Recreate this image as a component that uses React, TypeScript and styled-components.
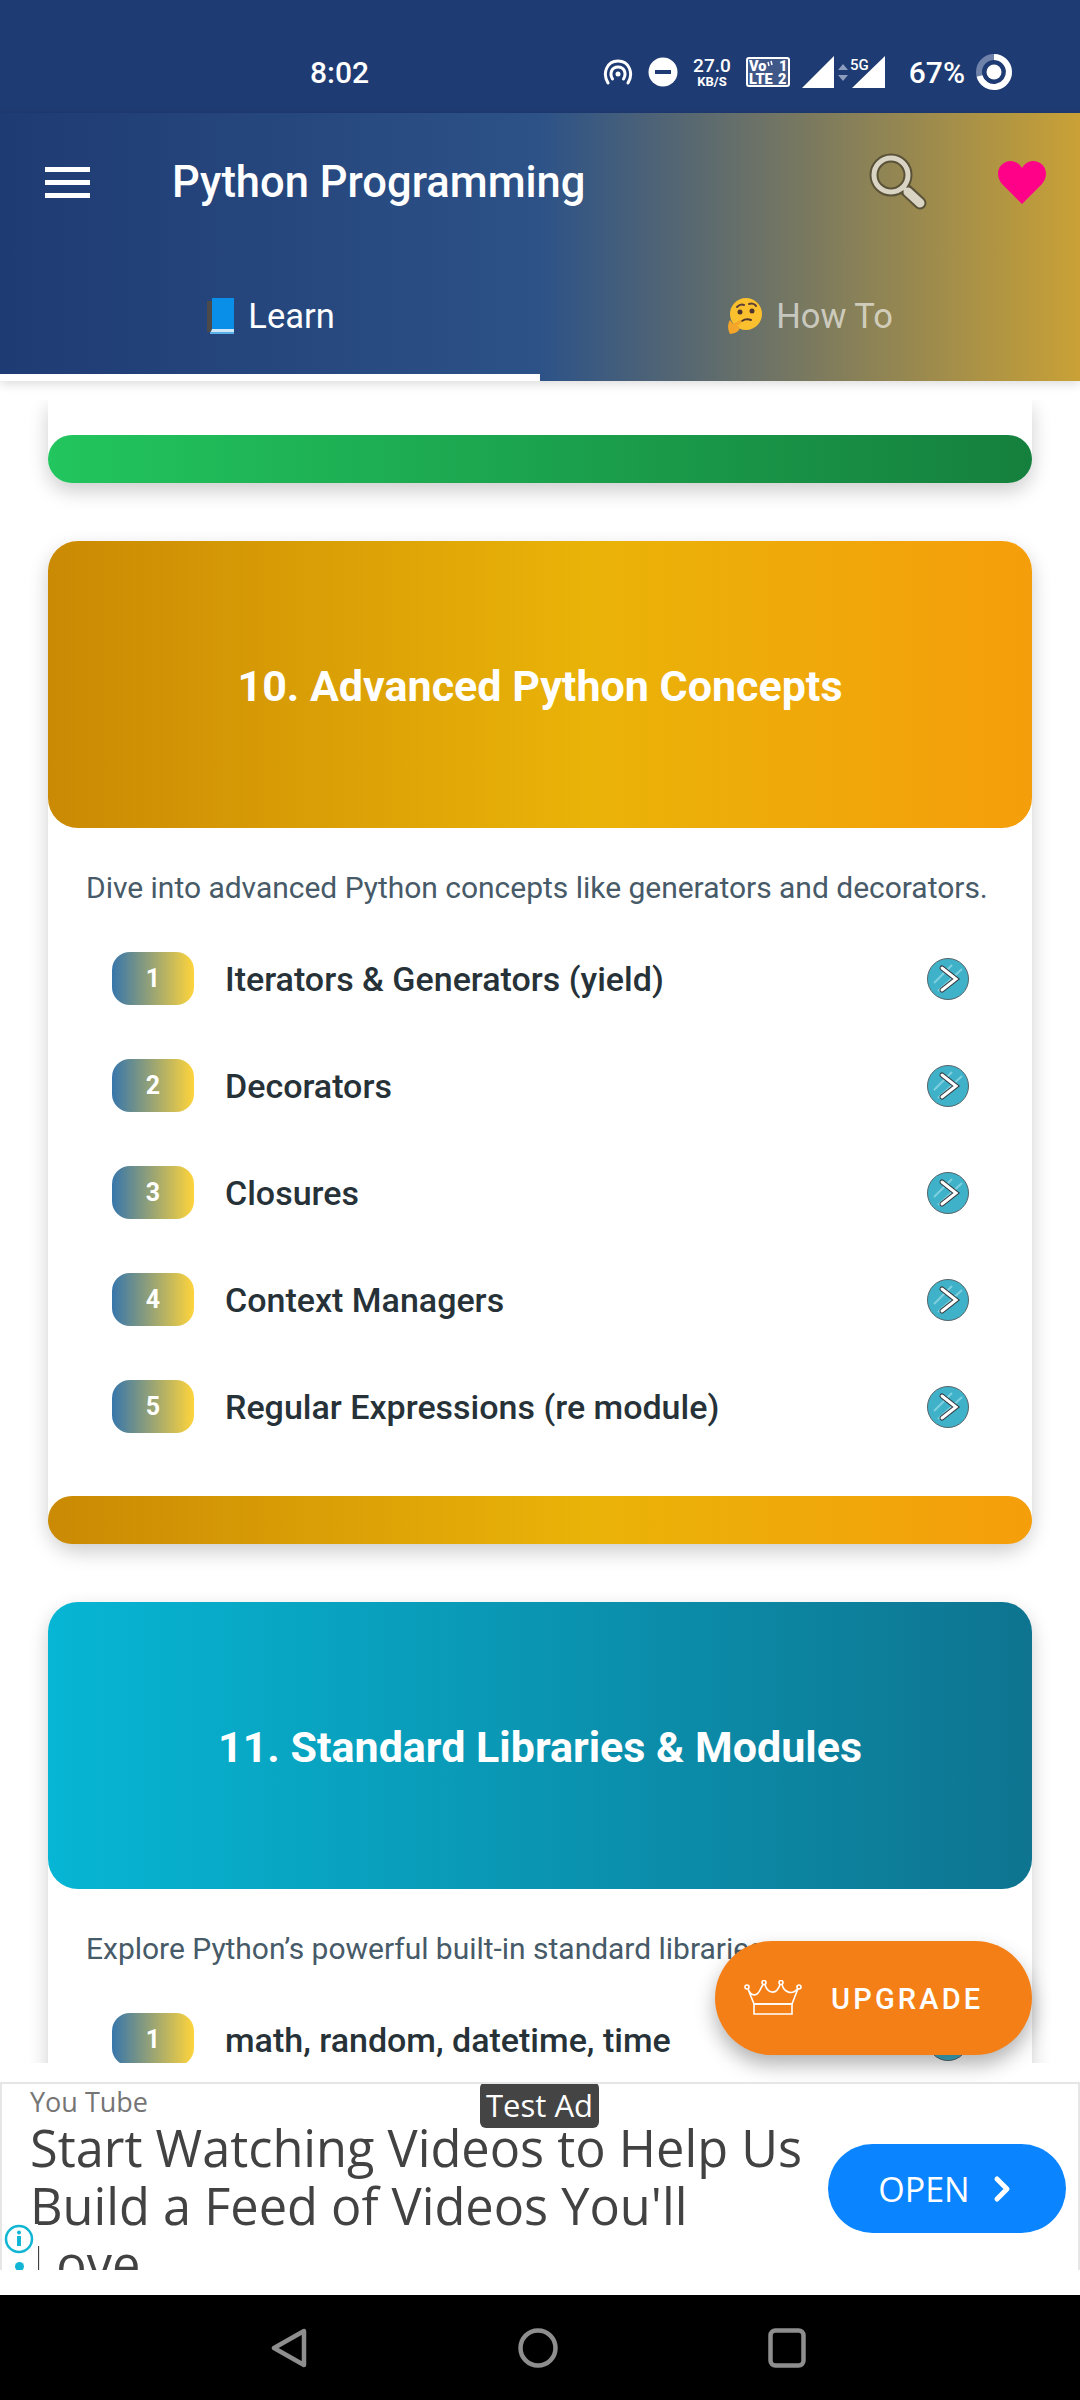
import React from "react";
import styled, { createGlobalStyle } from "styled-components";
import { ChevronRight } from "lucide-react";

type Lesson = { num: number; title: string };

const advanced: Lesson[] = [
  { num: 1, title: "Iterators & Generators (yield)" },
  { num: 2, title: "Decorators" },
  { num: 3, title: "Closures" },
  { num: 4, title: "Context Managers" },
  { num: 5, title: "Regular Expressions (re module)" },
];

const gold = "linear-gradient(90deg, #ca8a04 0%, #eab308 55%, #f59e0b 100%)";
const cyan = "linear-gradient(90deg, #06b6d4 0%, #0e7490 100%)";
const green = "linear-gradient(90deg, #22c55e 0%, #15803d 100%)";

function HotspotIcon() {
  return (
    <svg width="30" height="26" viewBox="0 0 30 26" fill="none" stroke="#fff" strokeWidth="3" strokeLinecap="round">
      <path d="M5 24C-1 14 4 2 15 2s16 12 10 22" />
      <path d="M9.500 20C6 14 9 8 15 8s9 6 5.500 12" />
      <circle cx="15" cy="15" r="2.500" fill="#fff" stroke="none" />
    </svg>
  );
}

function DndIcon() {
  return (
    <svg width="30" height="30" viewBox="0 0 30 30">
      <circle cx="15" cy="15" r="14.500" fill="#fff" />
      <rect x="7" y="13" width="16" height="4" fill="#1f3b73" />
    </svg>
  );
}

function VolteIcon() {
  return (
    <svg width="44" height="30" viewBox="0 0 44 30">
      <rect x="1" y="1" width="42" height="28" rx="2" fill="#fff" fillOpacity="0.15" stroke="#fff" strokeWidth="2" />
      <text x="3" y="13.500" fontFamily="Roboto, sans-serif" fontWeight="900" fontSize="14.500" fill="#fff">Vo</text>
      <path d="M22 5l1 4M25 4l1 4" stroke="#fff" strokeWidth="1.500" />
      <text x="33" y="13.500" fontFamily="Roboto, sans-serif" fontWeight="900" fontSize="14.500" fill="#fff">1</text>
      <text x="3" y="27" fontFamily="Roboto, sans-serif" fontWeight="900" fontSize="14.500" fill="#fff">LTE</text>
      <text x="32" y="27" fontFamily="Roboto, sans-serif" fontWeight="900" fontSize="14.500" fill="#fff">2</text>
    </svg>
  );
}

function SignalIcon() {
  return (
    <svg width="83" height="33" viewBox="0 0 83 33">
      <path d="M0 32 32 0v32z" fill="#fff" />
      <path d="M36 14l5-6 5 6zM36 19l5 6 5-6z" fill="#8c9dbd" />
      <path d="M50 32 83 0v32z" fill="#fff" />
      <text x="48" y="14" fontFamily="Roboto, sans-serif" fontWeight="500" fontSize="15" fill="#fff">5G</text>
    </svg>
  );
}

function BatteryIcon() {
  return (
    <svg width="38" height="38" viewBox="0 0 38 38" fill="none">
      <circle cx="19" cy="19" r="15" stroke="#6f83aa" strokeWidth="6" />
      <path d="M19 4a15 15 0 1 1-14.500 19" stroke="#fff" strokeWidth="6" />
      <circle cx="19" cy="19" r="7.500" fill="#fff" />
    </svg>
  );
}

function MagnifierIcon() {
  return (
    <svg width="58" height="58" viewBox="0 0 58 58" fill="none" strokeLinecap="round">
      <circle cx="22" cy="22" r="17" stroke="#5a5238" strokeWidth="9" />
      <path d="M37 37l14 13" stroke="#5a5238" strokeWidth="13" />
      <circle cx="22" cy="22" r="17" stroke="#d9d4c4" strokeWidth="5" />
      <path d="M35 35l3 3" stroke="#d9d4c4" strokeWidth="4" />
      <path d="M39 39l12 11" stroke="#d9d4c4" strokeWidth="9" />
    </svg>
  );
}

function HeartIcon() {
  return (
    <svg width="48" height="44" viewBox="0 0 48 44">
      <path d="M24 44 4 24C-2 17-1 7 6 3c6-4 14-2 18 5 4-7 12-9 18-5 7 4 8 14 2 21z" fill="#ff0088" />
    </svg>
  );
}

function BookIcon() {
  return (
    <svg width="30" height="36" viewBox="0 0 30 36">
      <path d="M2 3h6v31H2z" fill="#4a4a4a" />
      <path d="M7 0h22v31H7z" fill="#0a8fe8" />
      <path d="M7 31h22v5H5z" fill="#cfe8f7" />
      <path d="M5 34h24v2H5z" fill="#5cb0e8" />
    </svg>
  );
}

function ThinkingIcon() {
  return (
    <svg width="36" height="36" viewBox="0 0 36 36">
      <circle cx="19" cy="16" r="16" fill="#fbc02d" />
      <path d="M10 9c2-2 5-3 7-2M22 6c3-1 6 0 7 2" stroke="#5d4037" strokeWidth="2" fill="none" strokeLinecap="round" />
      <circle cx="13" cy="14" r="2.500" fill="#4e342e" />
      <circle cx="25" cy="13" r="2.500" fill="#4e342e" />
      <path d="M15 23c3-2 6-2 9-1" stroke="#4e342e" strokeWidth="2" fill="none" strokeLinecap="round" />
      <path d="M3 36c-3-6-2-11 0-14l3 4 7-4c2 0 2 3 0 4l-3 2c4 0 4 7-7 8z" fill="#f4a62a" />
    </svg>
  );
}

function ArrowBadge() {
  return (
    <svg width="44" height="44" viewBox="0 0 44 44" fill="none">
      <circle cx="22" cy="22" r="20.500" fill="#3fb2c9" stroke="#55656b" strokeWidth="1" />
      <path d="M8 26 26 8M12 34 36 12" stroke="#7fd0df" strokeWidth="2" />
      <path d="M16 11l14 11-14 11" stroke="#33363a" strokeWidth="5" strokeLinecap="round" strokeLinejoin="miter" />
      <path d="M16 11l14 11-14 11" stroke="#fff" strokeWidth="3" strokeLinecap="round" strokeLinejoin="miter" />
    </svg>
  );
}

function CrownIcon() {
  return (
    <svg width="58" height="36" viewBox="0 0 58 36" fill="none" stroke="#fff" strokeWidth="1.600">
      <circle cx="3" cy="7" r="2" />
      <circle cx="20" cy="2.500" r="2" />
      <circle cx="37" cy="2.500" r="2" />
      <circle cx="55" cy="7" r="2" />
      <path d="M4 9c3 7 9 9 13-1l2-3.500M21 4.500c2 8 11 12 15 0M38 4.500c2 8 10 11 16 4L48 24H10L4 9" />
      <path d="M10 24h38v10H10z" />
    </svg>
  );
}

function BackIcon() {
  return (
    <svg width="36" height="40" viewBox="0 0 36 40" fill="none">
      <path d="M33 3v34L3 20z" stroke="#8e8e8e" strokeWidth="4.500" strokeLinejoin="round" />
    </svg>
  );
}

function HomeIcon() {
  return (
    <svg width="40" height="40" viewBox="0 0 40 40" fill="none">
      <circle cx="20" cy="20" r="17.500" stroke="#8e8e8e" strokeWidth="4.500" />
    </svg>
  );
}

function RecentIcon() {
  return (
    <svg width="38" height="40" viewBox="0 0 38 40" fill="none">
      <rect x="2.500" y="2.500" width="33" height="35" rx="5" stroke="#8e8e8e" strokeWidth="4.500" />
    </svg>
  );
}

function InfoIcon() {
  return (
    <svg width="30" height="30" viewBox="0 0 30 30" fill="none">
      <circle cx="15" cy="15" r="13" stroke="#12b5d4" strokeWidth="2.500" />
      <circle cx="15" cy="8.500" r="2" fill="#12b5d4" />
      <rect x="13" y="12" width="4" height="10" fill="#12b5d4" />
    </svg>
  );
}

function LessonRow({ num, title }: Lesson) {
  return (
    <Row>
      <NumBadge>{num}</NumBadge>
      <RowTitle>{title}</RowTitle>
      <ArrowBadge />
    </Row>
  );
}

export default function App() {
  return (
    <Page>
      <GlobalStyle />
      <StatusBar>
        <Clock>8:02</Clock>
        <StatusIcons>
          <HotspotIcon />
          <DndIcon />
          <Speed>
            <SpeedValue>27.0</SpeedValue>
            <SpeedUnit>KB/S</SpeedUnit>
          </Speed>
          <VolteIcon />
          <SignalSlot>
            <SignalIcon />
          </SignalSlot>
          <Percent>67%</Percent>
          <BatteryIcon />
        </StatusIcons>
      </StatusBar>

      <Header>
        <Toolbar>
          <Burger>
            <span />
            <span />
            <span />
          </Burger>
          <AppTitle>Python Programming</AppTitle>
          <MagnifierIcon />
          <HeartIcon />
        </Toolbar>
        <Tabs>
          <Tab $active>
            <BookIcon />
            Learn
          </Tab>
          <Tab>
            <ThinkingIcon />
            How To
          </Tab>
        </Tabs>
      </Header>

      <Body>
        <Scroll>
          <Stub>
            <FootBar $bg={green} />
          </Stub>

          <Card>
            <Banner $bg={gold}>10. Advanced Python Concepts</Banner>
            <Desc>Dive into advanced Python concepts like generators and decorators.</Desc>
            <Lessons>
              {advanced.map((l) => (
                <LessonRow key={l.num} {...l} />
              ))}
            </Lessons>
            <FootBar $bg={gold} />
          </Card>

          <Card>
            <Banner $bg={cyan}>11. Standard Libraries &amp; Modules</Banner>
            <Desc>Explore Python’s powerful built-in standard libraries.</Desc>
            <Lessons>
              <LessonRow num={1} title="math, random, datetime, time" />
            </Lessons>
          </Card>
        </Scroll>

        <Upgrade>
          <CrownIcon />
          <UpgradeLabel>UPGRADE</UpgradeLabel>
        </Upgrade>
      </Body>

      <AdSlot>
        <Ad>
          <AdBadge>Test Ad</AdBadge>
          <AdText>
            <AdSource>You Tube</AdSource>
            <AdHeadline>Start Watching Videos to Help Us Build a Feed of Videos You'll Love</AdHeadline>
          </AdText>
          <OpenButton>
            OPEN
            <ChevronRight size={40} strokeWidth={3} />
          </OpenButton>
          <AdChoices>
            <InfoIcon />
            <AdDot />
          </AdChoices>
        </Ad>
      </AdSlot>

      <NavBar>
        <BackIcon />
        <HomeIcon />
        <RecentIcon />
      </NavBar>
    </Page>
  );
}

const GlobalStyle = createGlobalStyle`
  html, body {
    margin: 0;
    padding: 0;
    background: #fff;
  }
  * {
    box-sizing: border-box;
  }
`;

const Page = styled.div`
  position: relative;
  width: 1080px;
  height: 2400px;
  display: flex;
  flex-direction: column;
  overflow: hidden;
  font-family: Roboto, sans-serif;
  background: #fff;
`;

const StatusBar = styled.div`
  height: 113px;
  flex: none;
  display: flex;
  align-items: center;
  justify-content: space-between;
  padding: 31px 67px 0 310px;
  background: #1f3b73;
  color: #fff;
`;

const Clock = styled.div`
  font-size: 30px;
  font-weight: 500;
`;

const StatusIcons = styled.div`
  display: flex;
  align-items: center;
  gap: 15px;
`;

const Speed = styled.div`
  display: flex;
  flex-direction: column;
  align-items: center;
  line-height: 1;
`;

const SpeedValue = styled.span`
  font-size: 19px;
  font-weight: 500;
`;

const SpeedUnit = styled.span`
  font-size: 13px;
  font-weight: 700;
`;

const SignalSlot = styled.div`
  display: flex;
  margin: 0 9px 0 -3px;
`;

const Percent = styled.span`
  margin-right: -5px;
  font-size: 30px;
  font-weight: 500;
`;

const Header = styled.div`
  position: relative;
  z-index: 2;
  flex: none;
  height: 268px;
  display: flex;
  flex-direction: column;
  background: linear-gradient(90deg, #1f3b73 0%, #2c5288 50%, #c9a136 100%);
  box-shadow: 0 3px 10px rgba(0, 0, 0, 0.14);
`;

const Toolbar = styled.div`
  height: 138px;
  flex: none;
  display: flex;
  align-items: center;
  gap: 71px;
  padding: 0 34px 0 45px;
`;

const Burger = styled.div`
  width: 45px;
  margin-right: -71px;
  display: flex;
  flex-direction: column;
  gap: 8px;

  span {
    height: 5px;
    background: #fff;
  }
`;

const AppTitle = styled.div`
  flex: 1;
  margin-left: 82px;
  margin-right: -71px;
  font-size: 43.500px;
  font-weight: 500;
  color: #fff;
`;

const Tabs = styled.div`
  flex: 1;
  display: flex;
`;

const Tab = styled.div<{ $active?: boolean }>`
  flex: 1;
  display: flex;
  align-items: center;
  justify-content: center;
  gap: 13px;
  padding-top: 6px;
  font-size: 34.500px;
  color: ${(p) => (p.$active ? "#fff" : "rgba(255, 255, 255, 0.62)")};
  border-bottom: 7px solid ${(p) => (p.$active ? "#fff" : "transparent")};
`;

const Body = styled.div`
  position: relative;
  flex: none;
  height: 1682px;
  padding-top: 19px;
`;

const Scroll = styled.div`
  height: 100%;
  overflow: hidden;
  display: flex;
  flex-direction: column;
  gap: 58px;
  padding: 0 48px;
  background: #fff;
`;

const Stub = styled.div`
  flex: none;
  padding-top: 35px;
  border-radius: 0 0 24px 24px;
  background: #fff;
  box-shadow: 0 8px 20px rgba(0, 0, 0, 0.2);
`;

const Card = styled.div`
  flex: none;
  display: flex;
  flex-direction: column;
  border-radius: 30px;
  background: #fff;
  box-shadow: 0 8px 20px rgba(0, 0, 0, 0.2);
`;

const Banner = styled.div<{ $bg: string }>`
  height: 287px;
  display: flex;
  align-items: center;
  justify-content: center;
  padding-top: 2px;
  border-radius: 30px;
  background: ${(p) => p.$bg};
  font-size: 43px;
  font-weight: 700;
  color: #fff;
`;

const Desc = styled.div`
  margin-top: 42px;
  padding-left: 38px;
  font-size: 30px;
  line-height: 36px;
  letter-spacing: -0.020px;
  white-space: nowrap;
  color: #475a68;
`;

const Lessons = styled.div`
  margin-top: 19px;
  padding-bottom: 36px;
  display: flex;
  flex-direction: column;
`;

const Row = styled.div`
  height: 107px;
  display: flex;
  align-items: center;
  padding: 0 62px 0 64px;
`;

const NumBadge = styled.div`
  width: 82px;
  height: 53px;
  flex: none;
  display: flex;
  align-items: center;
  justify-content: center;
  border-radius: 18px;
  background: linear-gradient(90deg, #3776ab 0%, #ffd43b 100%);
  font-size: 25px;
  font-weight: 700;
  color: #fff;
`;

const RowTitle = styled.div`
  flex: 1;
  margin-left: 31px;
  font-size: 34px;
  font-weight: 500;
  color: #263238;
`;

const FootBar = styled.div<{ $bg: string }>`
  height: 48px;
  margin-top: auto;
  border-radius: 24px;
  background: ${(p) => p.$bg};
`;

const Upgrade = styled.div`
  position: absolute;
  right: 48px;
  bottom: 8px;
  width: 317px;
  height: 114px;
  display: flex;
  align-items: center;
  gap: 29px;
  padding-left: 29px;
  border-radius: 57px;
  background: #f57f17;
  box-shadow: 0 10px 20px rgba(0, 0, 0, 0.3);
`;

const UpgradeLabel = styled.span`
  padding-top: 2px;
  font-size: 29px;
  font-weight: 500;
  letter-spacing: 3.200px;
  color: #fff;
`;

const AdSlot = styled.div`
  flex: none;
  height: 232px;
  padding-top: 19px;
  background: #fff;
`;

const Ad = styled.div`
  position: relative;
  height: 188px;
  display: flex;
  justify-content: space-between;
  overflow: hidden;
  border: 2px solid #e6e6e6;
  border-width: 2px 2px 0;
  padding: 0 12px 0 28px;
  font-family: "Open Sans", sans-serif;
`;

const AdBadge = styled.div`
  position: absolute;
  top: -2px;
  left: 478px;
  width: 119px;
  height: 46px;
  display: flex;
  align-items: center;
  justify-content: center;
  border-radius: 6px;
  background: #444;
  font-size: 31px;
  color: #fff;
`;

const AdText = styled.div`
  width: 775px;
`;

const AdSource = styled.div`
  font-size: 27px;
  line-height: 35px;
  color: #757575;
`;

const AdHeadline = styled.div`
  font-size: 50.500px;
  line-height: 58px;
  color: #424242;
`;

const OpenButton = styled.div`
  margin-top: 60px;
  width: 238px;
  height: 89px;
  flex: none;
  display: flex;
  align-items: center;
  justify-content: center;
  gap: 12px;
  padding-left: 6px;
  border-radius: 45px;
  background: #0a84ff;
  font-size: 34px;
  color: #fff;
`;

const AdChoices = styled.div`
  position: absolute;
  left: 0;
  top: 140px;
  width: 36px;
  height: 48px;
  display: flex;
  flex-direction: column;
  align-items: center;
  gap: 8px;
  padding-right: 2px;
  background: #fff;
`;

const AdDot = styled.div`
  width: 9px;
  height: 9px;
  flex: none;
  border-radius: 50%;
  background: #12b5d4;
`;

const NavBar = styled.div`
  flex: 1;
  display: flex;
  align-items: center;
  padding: 0 274px 0 271px;
  justify-content: space-between;
  background: #000;
`;
